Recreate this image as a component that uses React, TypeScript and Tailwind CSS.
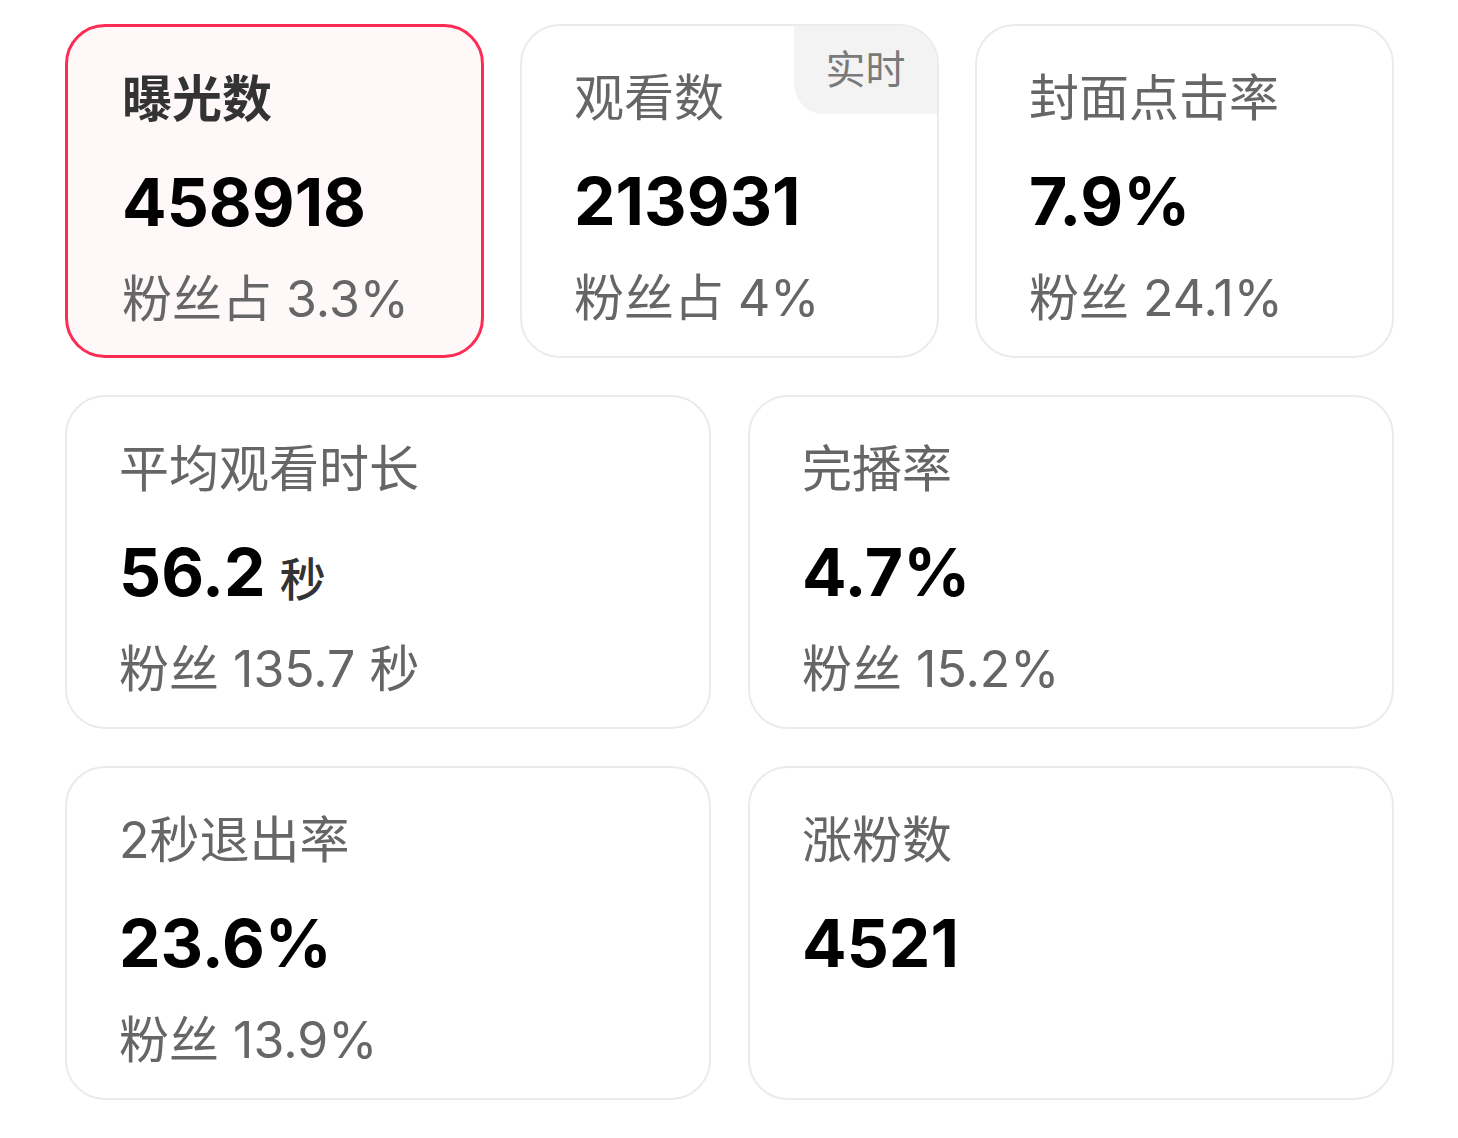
import React from 'react';

interface Metric {
  title: string;
  value: string;
  unit?: string;
  sub?: string;
  active?: boolean;
  badge?: string;
}

const topRow: Metric[] = [
  { title: '曝光数', value: '458918', sub: '粉丝占 3.3%', active: true },
  { title: '观看数', value: '213931', sub: '粉丝占 4%', badge: '实时' },
  { title: '封面点击率', value: '7.9%', sub: '粉丝 24.1%' },
];

const bottomRows: Metric[] = [
  { title: '平均观看时长', value: '56.2', unit: '秒', sub: '粉丝 135.7 秒' },
  { title: '完播率', value: '4.7%', sub: '粉丝 15.2%' },
  { title: '2秒退出率', value: '23.6%', sub: '粉丝 13.9%' },
  { title: '涨粉数', value: '4521' },
];

const MetricCard: React.FC<{ item: Metric }> = ({ item }) => (
  <div
    className={`relative h-[334px] overflow-hidden rounded-[40px] pt-[42px] ${
      item.active
        ? 'border-[3px] border-[#fe2c55] bg-[#fff8f8] pl-[54px]'
        : 'border-2 border-[#ebebeb] bg-white pl-[52px]'
    }`}
  >
    {item.badge && (
      <div className="absolute right-0 top-0 flex h-[88px] w-[143px] items-center justify-center rounded-bl-[30px] bg-[#f3f3f3] text-[40px] text-[#7a7a7a]">
        {item.badge}
      </div>
    )}
    <div
      className={`text-[50px] leading-[60px] ${
        item.active ? 'font-bold text-[#333]' : 'text-[#666]'
      }`}
    >
      {item.title}
    </div>
    <div className="mt-[33px] flex h-[80px] items-baseline text-[66px] font-bold leading-[80px] text-black">
      <span>{item.value}</span>
      {item.unit && (
        <span className="ml-[14px] text-[46px] font-medium leading-none text-[#333]">
          {item.unit}
        </span>
      )}
    </div>
    {item.sub && (
      <div className="mt-[27px] text-[50px] leading-[60px] text-[#666]">
        {item.sub}
      </div>
    )}
  </div>
);

export default function App() {
  return (
    <div
      className="h-[1138px] w-[1458px] bg-white pl-[65px] pt-[24px]"
      style={{ fontFamily: 'Inter, "Noto Sans CJK SC", sans-serif' }}
    >
      <div className="flex w-[1329px] flex-col gap-[37px]">
        <div className="grid grid-cols-3 gap-[36px]">
          {topRow.map((m) => (
            <MetricCard key={m.title} item={m} />
          ))}
        </div>
        <div className="grid grid-cols-2 gap-[37px]">
          {bottomRows.map((m) => (
            <MetricCard key={m.title} item={m} />
          ))}
        </div>
      </div>
    </div>
  );
}
